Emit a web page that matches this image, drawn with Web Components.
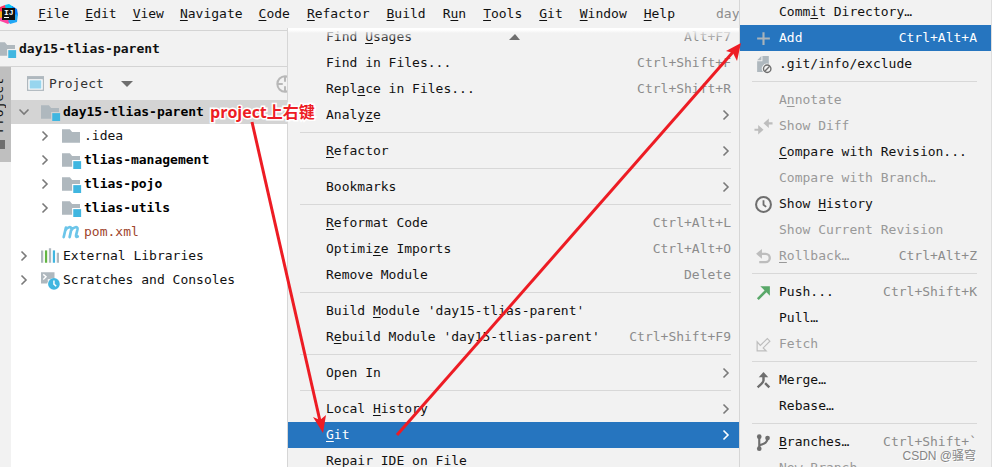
<!DOCTYPE html>
<html lang="zh-CN">
<head>
<meta charset="utf-8">
<title>day15-tlias-parent</title>
<style>
  html, body {
    margin: 0;
    height: 100%;
    background: #fff;
  }
  body {
    box-sizing: border-box;
    padding-bottom: 4px;
    overflow: hidden;
    font: 13px/26px "DejaVu Sans Mono", "Noto Sans CJK SC", monospace;
    color: #111;
    --panel: #f2f2f2;
    --line: #d4d4d4;
    --accent: #2675bf;
    --muted: #8c8c8c;
    --red: #ed1c24;
  }
  u {
    text-underline-offset: 2px;
  }
</style>
</head>
<body>
<ide-window>
  <menu-bar slot="menubar">
    <menu-title><u>F</u>ile</menu-title>
    <menu-title><u>E</u>dit</menu-title>
    <menu-title><u>V</u>iew</menu-title>
    <menu-title><u>N</u>avigate</menu-title>
    <menu-title><u>C</u>ode</menu-title>
    <menu-title><u>R</u>efactor</menu-title>
    <menu-title><u>B</u>uild</menu-title>
    <menu-title>R<u>u</u>n</menu-title>
    <menu-title><u>T</u>ools</menu-title>
    <menu-title><u>G</u>it</menu-title>
    <menu-title><u>W</u>indow</menu-title>
    <menu-title><u>H</u>elp</menu-title>
    <span slot="title">day</span>
  </menu-bar>
  <nav-bar slot="navbar">day15-tlias-parent</nav-bar>
  <tool-strip slot="strip">Project</tool-strip>
  <project-panel slot="panel">
    <tree-row icon="module" arrow="down" bold selected>day15-tlias-parent</tree-row>
    <tree-row icon="folder" arrow="right" child>.idea</tree-row>
    <tree-row icon="module" arrow="right" child bold>tlias-management</tree-row>
    <tree-row icon="module" arrow="right" child bold>tlias-pojo</tree-row>
    <tree-row icon="module" arrow="right" child bold>tlias-utils</tree-row>
    <tree-row icon="maven" child unversioned>pom.xml</tree-row>
    <tree-row icon="libraries" arrow="right">External Libraries</tree-row>
    <tree-row icon="scratches" arrow="right">Scratches and Consoles</tree-row>
  </project-panel>

  <popup-menu slot="overlay" class="context" scrolled>
    <menu-row keys="Alt+F7">Find <u>U</u>sages</menu-row>
    <menu-row keys="Ctrl+Shift+F">Find in Files...</menu-row>
    <menu-row keys="Ctrl+Shift+R">Repl<u>a</u>ce in Files...</menu-row>
    <menu-row more>Analy<u>z</u>e</menu-row>
    <menu-line></menu-line>
    <menu-row more><u>R</u>efactor</menu-row>
    <menu-line></menu-line>
    <menu-row more>Bookmarks</menu-row>
    <menu-line></menu-line>
    <menu-row keys="Ctrl+Alt+L"><u>R</u>eformat Code</menu-row>
    <menu-row keys="Ctrl+Alt+O">Optimi<u>z</u>e Imports</menu-row>
    <menu-row keys="Delete">Remove Module</menu-row>
    <menu-line></menu-line>
    <menu-row>Build <u>M</u>odule 'day15-tlias-parent'</menu-row>
    <menu-row keys="Ctrl+Shift+F9">R<u>e</u>build Module 'day15-tlias-parent'</menu-row>
    <menu-line></menu-line>
    <menu-row more>Open In</menu-row>
    <menu-line></menu-line>
    <menu-row more>Local <u>H</u>istory</menu-row>
    <menu-row more selected><u>G</u>it</menu-row>
    <menu-row>Repair IDE on File</menu-row>
  </popup-menu>

  <popup-menu slot="overlay" class="git">
    <menu-row>Comm<u>i</u>t Directory…</menu-row>
    <menu-row icon="add" keys="Ctrl+Alt+A" selected>Add</menu-row>
    <menu-row icon="exclude">.git/info/exclude</menu-row>
    <menu-line></menu-line>
    <menu-row disabled>A<u>n</u>notate</menu-row>
    <menu-row icon="diff" disabled>Show Diff</menu-row>
    <menu-row><u>C</u>ompare with Revision...</menu-row>
    <menu-row disabled>Compare with Branch…</menu-row>
    <menu-row icon="history">Show <u>H</u>istory</menu-row>
    <menu-row disabled>Show Current Revision</menu-row>
    <menu-row icon="rollback" keys="Ctrl+Alt+Z" disabled><u>R</u>ollback…</menu-row>
    <menu-line></menu-line>
    <menu-row icon="push" keys="Ctrl+Shift+K">Push...</menu-row>
    <menu-row>Pull…</menu-row>
    <menu-row icon="fetch" disabled>Fetch</menu-row>
    <menu-line></menu-line>
    <menu-row icon="merge">Merge…</menu-row>
    <menu-row>Rebase…</menu-row>
    <menu-line></menu-line>
    <menu-row icon="branch" keys="Ctrl+Shift+`"><u>B</u>ranches…</menu-row>
    <menu-row disabled>New Branch</menu-row>
  </popup-menu>

  <note-layer slot="overlay">project上右键</note-layer>
  <water-mark slot="overlay">CSDN @骚穹</water-mark>
</ide-window>

<script>
"use strict";

const FOLDER = `<path fill="#afb8be" d="M0 2h7l2 2.500h7V14H0z"/>`;

// every icon is drawn on a 16 x 16 grid
const ICONS = {
  folder: FOLDER,
  module: `<path fill="#afb8be" d="M0 2h7l2 2.500h7V8H9v6H0z"/><path fill="#40b6e0" d="M10 9h7v7h-7z"/>`,
  maven: `<path fill="none" stroke="#6cc5e9" stroke-width="2.400" stroke-linecap="round" stroke-linejoin="round" d="M1.500 12.500 3.500 4M3 6.500C4.500 3.500 8.800 2.500 8.300 5.500L6.800 12.500M8.200 6.500C10 3.500 14.400 2.500 13.800 5.500L12.500 11c-.2 1.300.5 1.500 1.500 1"/>`,
  libraries: `<path fill="#afb8be" d="M0 3h2v11H0zM7 1h2v13H7zM14 5h2v9h-2z"/><path fill="#62b543" d="M3.500 3h2v11h-2z"/><path fill="#40b6e0" d="M10.500 3h2v11h-2z"/>`,
  scratches: `<path fill="#afb8be" d="M0 1h12v5.500A5.500 5.500 0 0 0 5.500 11H0z"/><path fill="none" stroke="#fff" stroke-width="1.200" d="M2 3l2.500 2.200L2 7.500M6 8h3"/><circle cx="11.500" cy="11.500" r="5.200" fill="#40b6e0"/><path fill="none" stroke="#fff" stroke-width="1.300" d="M11.500 8.500v3.200l2 1.800"/>`,
  project: `<path fill="#afb8be" d="M0 1h16v14H0z"/><path fill="#fff" d="M1.200 4h13.600v9.800H1.200z"/><path fill="#97d5ee" d="M2.500 5h11v7.800h-11z"/>`,
  target: `<g fill="none" stroke="#b8b8b8" stroke-width="1.800"><circle cx="8" cy="8" r="6.800"/><path d="M8 1v5M8 10v5M1 8h5M10 8h5"/></g>`,
  right: `<path fill="none" stroke="currentColor" stroke-width="1.600" d="M5.500 3.500 10 8l-4.500 4.500"/>`,
  down: `<path fill="none" stroke="currentColor" stroke-width="1.600" d="M3.500 5.500 8 10l4.500-4.500"/>`,
  add: `<path fill="#a9b3ba" d="M7 2h2v5h5v2H9v5H7V9H2V7h5z"/>`,
  exclude: `<path fill="#afb8be" d="M7 0h6v7.500A4.800 4.800 0 0 0 7.500 15H2V5h5z"/><path fill="#afb8be" d="M6 0v4H2z"/><circle cx="11.500" cy="12" r="4.600" fill="#f2f2f2"/><circle cx="11.500" cy="12" r="3.500" fill="none" stroke="#6e6e6e" stroke-width="1.300"/><path stroke="#6e6e6e" stroke-width="1.300" d="m9.200 14.300 4.600-4.600"/>`,
  diff: `<path fill="#bdbdbd" d="M8 5l5-4.500v3.500h3.500v2H13v3.500zM8 11l-5-4.500V10H-.5v2H3v3.500z"/>`,
  history: `<g fill="none" stroke="#6e6e6e"><circle cx="8" cy="8" r="7" stroke-width="1.900"/><path stroke-width="1.700" d="M8 4v4.200l2.500 2"/></g>`,
  rollback: `<path fill="#bdbdbd" d="M1 5.500 6.500 1v9z"/><path fill="none" stroke="#bdbdbd" stroke-width="2.200" d="M5.500 5.500H10a3.900 3.900 0 0 1 0 7.800H4"/>`,
  push: `<path fill="#59a869" d="M5 2h9v9l-3.200-3.200-7.300 7.200-1.700-1.700L9 6z"/>`,
  fetch: `<path fill="none" stroke="#bdbdbd" stroke-width="1.100" d="M2 5.500V14h8.500L7.700 11.200 14 4.900l-2.400-2.400L5 8.800z"/>`,
  merge: `<path fill="#6e6e6e" d="M8 0l4.500 5H3.500z"/><path fill="none" stroke="#6e6e6e" stroke-width="2.300" d="M8 4v4c0 2-3 4-5.500 6.500M9.500 10.500l4 4"/>`,
  branch: `<g fill="#6e6e6e"><circle cx="4" cy="2.500" r="2.200"/><circle cx="4" cy="13.800" r="2.200"/><circle cx="11.800" cy="3.800" r="2.200"/></g><path fill="none" stroke="#6e6e6e" stroke-width="2" d="M4 2v12M11.800 4c0 4-2.300 5-7.500 6.500"/>`
};

const svg = (name, size = 18) =>
  `<svg class="icon" width="${size}" height="${size}" viewBox="0 0 16 16" overflow="visible" aria-hidden="true">${ICONS[name] || ''}</svg>`;

class BaseElement extends HTMLElement {
  constructor() {
    super();
    const template = document.createElement('template');
    template.innerHTML = this.render();
    this.attachShadow({mode: 'open'}).appendChild(template.content.cloneNode(true));
  }
}

class IdeWindow extends BaseElement {
  render() {
    return `
      <style>
        :host {
          display: flex;
          flex-direction: column;
          position: relative;
          height: 100%;
          overflow: hidden;
          background: var(--panel);
        }
        main {
          flex: 1;
          display: flex;
          min-height: 0;
          background: #fff;
        }
        ::slotted(popup-menu) {
          position: absolute;
          bottom: 0;
        }
        ::slotted(.context) {
          top: 28px;
          left: 287px;
          right: 252px;
          --pad-left: 38px;
          --pad-right: 9px;
        }
        ::slotted(.git) {
          top: 0;
          right: 1px;
          width: 252px;
          --pad-left: 39px;
          --pad-right: 14px;
        }
        ::slotted(note-layer) {
          position: absolute;
          inset: 0;
        }
        ::slotted(water-mark) {
          position: absolute;
          right: 16px;
          bottom: 2px;
        }
      </style>
      <slot name="menubar"></slot>
      <slot name="navbar"></slot>
      <main>
        <slot name="strip"></slot>
        <slot name="panel"></slot>
      </main>
      <slot name="overlay"></slot>
    `;
  }
}

class MenuBar extends BaseElement {
  render() {
    return `
      <style>
        :host {
          display: flex;
          align-items: center;
          height: 31px;
          padding-bottom: 2px;
          box-sizing: border-box;
          border-bottom: 1px solid var(--line);
        }
        nav {
          display: flex;
          gap: 16px;
          margin: 0 40px 0 20px;
        }
        ::slotted(menu-title:nth-of-type(n+5)) {
          margin-right: 1px;
        }
        ::slotted(span) {
          color: var(--muted);
        }
      </style>
      <svg width="18" height="20" viewBox="0 0 18 20" aria-hidden="true">
        <path fill="#fe315d" d="M0 3 5 1l3 4-6 5-2-1z"/>
        <path fill="#f9a512" d="M0 7l3 1v7l-3-1z"/>
        <path fill="#fe45a0" d="M0 14l4-1 7 4-3 3-5-2-3-1z"/>
        <path fill="#07c3f2" d="M5 1 9 0l6 4-1 3H6z"/>
        <path fill="#087cfa" d="M12 2l5 3 1 6-4 5z"/>
        <path fill="#21a7f5" d="M14 11l4-1-1 8-7 2-2-3z"/>
        <path fill="#111" d="M2 4h13v12H2z"/>
        <text x="4" y="11" fill="#fff" font-family="Liberation Mono" font-size="8" font-weight="700">IJ</text>
        <path fill="#fff" d="M4 13h5v1H4z"/>
      </svg>
      <nav><slot></slot></nav>
      <slot name="title"></slot>
    `;
  }
}

class MenuTitle extends BaseElement {
  render() {
    return `
      <style>
        :host { display: block; }
        button {
          display: block;
          padding: 0;
          border: 0;
          background: none;
          font: inherit;
          color: inherit;
        }
      </style>
      <button type="button"><slot></slot></button>
    `;
  }
}

class NavBar extends BaseElement {
  render() {
    return `
      <style>
        :host {
          display: flex;
          align-items: center;
          gap: 4px;
          height: 36px;
          box-sizing: border-box;
          border-bottom: 1px solid var(--line);
          font-weight: 700;
        }
        .icon { margin-left: -3px; }
      </style>
      ${svg('module')}<span><slot></slot></span>
    `;
  }
}

class ToolStrip extends BaseElement {
  render() {
    return `
      <style>
        :host {
          display: block;
          width: 11px;
          flex: none;
          overflow: hidden;
          background: var(--panel);
        }
        button {
          display: flex;
          flex-direction: column;
          align-items: flex-start;
          gap: 7px;
          width: 11px;
          height: 95px;
          padding: 11px 0 0;
          border: 0;
          background: #bfbfbf;
          font: inherit;
          line-height: 16px;
          color: #111;
        }
        span {
          writing-mode: vertical-rl;
          transform: rotate(180deg);
          margin-left: -9px;
        }
        i {
          width: 5px;
          height: 9px;
          background: #6e6e6e;
        }
      </style>
      <button type="button"><span><slot></slot></span><i></i></button>
    `;
  }
}

class ProjectPanel extends BaseElement {
  render() {
    return `
      <style>
        :host {
          display: block;
          width: 276px;
          flex: none;
          overflow: hidden;
          background: #fff;
        }
        header {
          display: flex;
          align-items: center;
          height: 33px;
          padding-left: 16px;
          background: var(--panel);
          color: #333;
        }
        button {
          display: flex;
          align-items: center;
          gap: 5px;
          padding: 0;
          border: 0;
          background: none;
          font: inherit;
          color: inherit;
        }
        .caret { margin-left: 12px; }
        .target {
          margin-left: auto;
          margin-right: -7px;
        }
      </style>
      <header>
        <button type="button">
          ${svg('project', 17)}Project
          <svg class="caret" width="12" height="6" viewBox="0 0 12 6" aria-hidden="true"><path fill="#6e6e6e" d="M0 0h12L6 6z"/></svg>
        </button>
        <button type="button" class="target" aria-label="Select Opened File">${svg('target')}</button>
      </header>
      <div role="tree"><slot></slot></div>
    `;
  }
}

class TreeRow extends BaseElement {
  render() {
    return `
      <style>
        :host {
          display: flex;
          align-items: center;
          height: 24px;
          padding-left: 5px;
          white-space: nowrap;
        }
        :host([child]) { padding-left: 26px; }
        :host([bold]) { font-weight: 700; color: #000; }
        :host([selected]) { background: #d4d4d4; }
        :host([unversioned]) { color: #a0442c; }
        .arrow {
          display: flex;
          width: 25px;
          color: #7a7a7a;
        }
        .kind {
          display: flex;
          width: 22px;
        }
      </style>
      <span class="arrow">${svg(this.getAttribute('arrow'), 16)}</span>
      <span class="kind">${svg(this.getAttribute('icon'))}</span>
      <span><slot></slot></span>
    `;
  }

  connectedCallback() {
    this.setAttribute('role', 'treeitem');
  }
}

class PopupMenu extends BaseElement {
  render() {
    return `
      <style>
        :host {
          display: block;
          box-sizing: border-box;
          overflow: hidden;
          background: var(--panel);
          border-left: 1px solid #d6d6d6;
          box-shadow: 1px 0 #dedede;
        }
        .rows { margin-top: -1px; }
        .up { display: none; }
        /* a scrolled menu fades out under its top edge */
        :host([scrolled]) .rows { margin-top: -4px; }
        :host([scrolled]) .up {
          display: flex;
          justify-content: center;
          align-items: flex-end;
          position: absolute;
          inset: 0 0 auto;
          height: 12px;
          background: linear-gradient(#fff 2px, #f2f2f2aa 5px, #f2f2f200);
        }
      </style>
      <div class="rows" role="menu"><slot></slot></div>
      <div class="up"><svg width="11" height="6" viewBox="0 0 11 6" aria-hidden="true"><path fill="#6e6e6e" d="M0 6h11L6 0z"/></svg></div>
    `;
  }
}

class MenuRow extends BaseElement {
  render() {
    const keys = this.getAttribute('keys');
    return `
      <style>
        :host { display: block; }
        button {
          display: flex;
          align-items: center;
          width: 100%;
          height: 26px;
          padding: 0 var(--pad-right) 0 0;
          border: 0;
          background: none;
          font: inherit;
          color: inherit;
          white-space: nowrap;
        }
        .kind {
          display: flex;
          box-sizing: border-box;
          width: var(--pad-left);
          padding-left: 15px;
        }
        kbd {
          margin-left: auto;
          font: inherit;
          color: var(--muted);
        }
        .more {
          display: flex;
          margin: 0 -3px 0 auto;
          color: #7a7a7a;
        }
        :host([disabled]) button { color: #999; }
        :host([selected]) button { background: var(--accent); }
        :host([selected]) :is(button, kbd, .more) { color: #fff; }
      </style>
      <button type="button" role="menuitem" ${this.hasAttribute('disabled') ? 'disabled' : ''}>
        <span class="kind">${svg(this.getAttribute('icon'), 17)}</span>
        <span><slot></slot></span>
        ${keys ? `<kbd>${keys}</kbd>` : ''}
        ${this.hasAttribute('more') ? `<span class="more">${svg('right', 16)}</span>` : ''}
      </button>
    `;
  }
}

class MenuLine extends BaseElement {
  render() {
    return `
      <style>
        :host {
          display: block;
          height: 10px;
          padding: 4px var(--pad-right) 0 12px;
          box-sizing: border-box;
        }
        hr {
          margin: 0;
          border: 0;
          border-top: 1px solid #d8d8d8;
        }
      </style>
      <hr>
    `;
  }
}

class NoteLayer extends BaseElement {
  render() {
    return `
      <style>
        :host {
          display: block;
          pointer-events: none;
        }
        svg {
          position: absolute;
          inset: 0;
        }
        span {
          position: absolute;
          top: 100px;
          left: 210px;
          font: 700 16px/24px "Open Sans", "Noto Sans CJK SC", sans-serif;
          color: var(--red);
          paint-order: stroke;
          -webkit-text-stroke: 3px #fff;
        }
      </style>
      <span><slot></slot></span>
      <svg width="992" height="467" viewBox="0 0 992 467" aria-hidden="true">
        <g fill="none" stroke="#ed1c24" stroke-width="3">
          <path d="M252 122 320 421"/>
          <path d="M397 435 733 52"/>
        </g>
        <g fill="#ed1c24">
          <path d="M323 433 313 417l7 3 6-5z"/>
          <path d="M741 43 726 51l7 2 4 8z"/>
        </g>
      </svg>
    `;
  }
}

class WaterMark extends BaseElement {
  render() {
    return `
      <style>
        :host {
          display: block;
          font: 12px/18px "Liberation Sans", "Noto Sans CJK SC", sans-serif;
          color: #858585;
          text-shadow: 1px 1px #fff;
        }
      </style>
      <slot></slot>
    `;
  }
}

customElements.define('ide-window', IdeWindow);
customElements.define('menu-bar', MenuBar);
customElements.define('menu-title', MenuTitle);
customElements.define('nav-bar', NavBar);
customElements.define('tool-strip', ToolStrip);
customElements.define('project-panel', ProjectPanel);
customElements.define('tree-row', TreeRow);
customElements.define('popup-menu', PopupMenu);
customElements.define('menu-row', MenuRow);
customElements.define('menu-line', MenuLine);
customElements.define('note-layer', NoteLayer);
customElements.define('water-mark', WaterMark);
</script>
</body>
</html>
